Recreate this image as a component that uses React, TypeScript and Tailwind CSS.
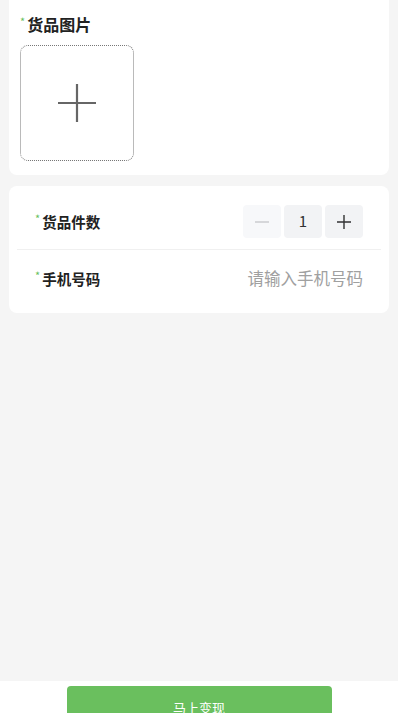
// Sell-goods form: photo upload card, quantity / phone card, and a
// fixed green submit bar at the bottom.

function Star() {
  return (
    <span className="mr-[2px] -translate-y-[3px] text-[11px] leading-none text-[#6abf5e]">
      *
    </span>
  );
}

function Stepper({ value }: { value: number }) {
  return (
    <div className="flex items-center gap-[3px]">
      <button className="flex h-[33px] w-[38px] items-center justify-center rounded-[4px] bg-[#f7f8fa]">
        <svg width="16" height="16" viewBox="0 0 16 16">
          <path d="M1 8h14" stroke="#c8c9cc" strokeWidth="1.4" />
        </svg>
      </button>
      <div className="flex h-[33px] w-[38px] items-center justify-center rounded-[4px] bg-[#f2f3f5] text-[15px] text-[#323233]">
        {value}
      </div>
      <button className="flex h-[33px] w-[38px] items-center justify-center rounded-[4px] bg-[#f2f3f5]">
        <svg width="16" height="16" viewBox="0 0 16 16">
          <path d="M1 8h14M8 1v14" stroke="#323233" strokeWidth="1.4" />
        </svg>
      </button>
    </div>
  );
}

export default function App() {
  return (
    <div
      className="h-[713px] overflow-hidden bg-[#f5f5f5]"
      style={{ fontFamily: '"Noto Sans CJK SC", "Noto Sans", sans-serif' }}
    >
      <div className="flex h-[681px] flex-col px-[9px]">
        <section className="mt-[-8px] rounded-lg bg-white px-[11px] pb-[14px] pt-[20px]">
          <div className="flex items-center">
            <Star />
            <h2 className="text-[16px] font-bold leading-[24px] text-[#222]">货品图片</h2>
          </div>
          <div className="mt-[9px] flex h-[116px] w-[114px] items-center justify-center rounded-lg border border-dotted border-[#777]">
            <svg width="38" height="38" viewBox="0 0 38 38">
              <path d="M0 19h38M19 0v38" stroke="#666" strokeWidth="2.2" />
            </svg>
          </div>
        </section>

        <section className="mt-[11px] rounded-lg bg-white px-[8px] pb-[6px] pt-[8px]">
          <div className="flex h-[56px] items-center justify-between border-b border-[#f0f0f0] px-[18px]">
            <div className="flex items-center">
              <Star />
              <span className="text-[14.5px] font-bold text-[#222]">货品件数</span>
            </div>
            <Stepper value={1} />
          </div>
          <div className="flex h-[57px] items-center justify-between px-[18px]">
            <div className="flex items-center">
              <Star />
              <span className="text-[14.5px] font-bold text-[#222]">手机号码</span>
            </div>
            <input
              className="w-[160px] bg-transparent text-right text-[16.5px] text-[#333] outline-none placeholder:text-[#a0a0a0]"
              placeholder="请输入手机号码"
            />
          </div>
        </section>
      </div>

      <div className="flex justify-center bg-white pt-[5px]">
        <button className="h-[44px] w-[265px] rounded-[4px] bg-[#6abf5e] text-[13px] text-white">
          马上变现
        </button>
      </div>
    </div>
  );
}
